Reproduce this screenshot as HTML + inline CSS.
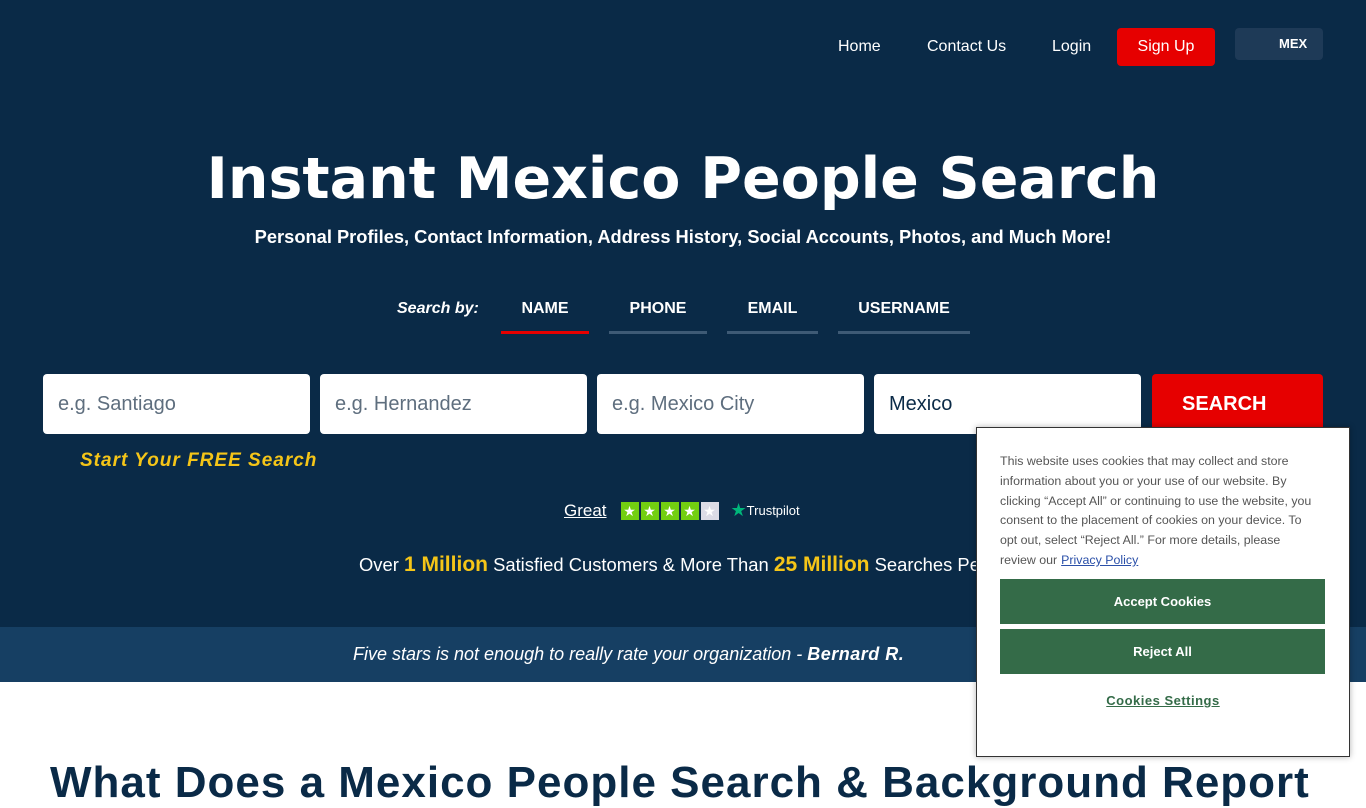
<!DOCTYPE html>
<html><head><meta charset="utf-8"><style>
*{margin:0;padding:0;box-sizing:border-box}
body{width:1366px;height:768px;overflow:hidden;font-family:"Liberation Sans",Arial,sans-serif;background:#fff;position:relative}
.hero{position:absolute;left:0;top:0;width:1366px;height:627px;background:#0a2a47;color:#fff}
.nav a{position:absolute;top:38px;font-size:16px;color:#fff}
.signup{position:absolute;left:1117px;top:28px;width:98px;height:38px;background:#e60000;border-radius:4px;font-size:16px;text-align:center;line-height:37px}
.mex{position:absolute;left:1235px;top:28px;width:88px;height:32px;background:#1e3a57;border-radius:4px;font-size:13px;font-weight:bold;line-height:32px;padding-left:44px}
h1{position:absolute;left:0;width:1366px;top:146px;text-align:center;font-size:57px;font-family:"DejaVu Sans","Liberation Sans",sans-serif;font-weight:bold;white-space:nowrap}
.sub{position:absolute;width:1366px;top:226px;text-align:center;font-size:18.3px;font-weight:bold}
.sb{position:absolute;top:300px;font-size:16px;font-weight:bold}
.tab{position:absolute;top:300px;font-size:16px;font-weight:bold;text-align:center}
.ul{position:absolute;top:331px;height:3px;background:#3e5a75}
input{position:absolute;top:374px;height:60px;width:267px;border:none;border-radius:4px;padding-left:15px;font-size:20px;font-family:"Liberation Sans",sans-serif;color:#0a2a47}
input::placeholder{color:#5e6e7e}
.btn{position:absolute;left:1152px;top:374px;width:171px;height:60px;background:#e60000;border-radius:4px;font-size:20px;font-weight:bold;line-height:60px;padding-left:30px}
.free{position:absolute;left:80px;top:450px;color:#f5c518;font-size:19px;font-weight:bold;font-style:italic;letter-spacing:1px}
.tp{position:absolute;top:500px;left:564px;font-size:17px;display:flex;align-items:center}
.st{width:18px;height:18px;background:#73cf11;margin-right:2px;color:#fff;font-size:14px;text-align:center;line-height:18px}
.over{position:absolute;top:553px;left:359px;font-size:18.4px;white-space:nowrap}
.over b{color:#f5c518;font-size:21px}
.band{position:absolute;top:627px;left:0;width:1366px;height:55px;background:#163f63;color:#fff;font-style:italic;font-size:18px;line-height:55px;padding-left:353px}
.band b{letter-spacing:.5px}
h2{position:absolute;top:758px;left:50px;font-size:44px;color:#0a2a47;font-weight:900;white-space:nowrap;letter-spacing:1px}
.ck{position:absolute;left:976px;top:427px;width:374px;height:330px;background:#fff;border:1px solid #333;box-shadow:0 0 6px rgba(0,0,0,.3)}
.ck p{position:absolute;left:23px;top:24px;width:312px;font-size:12.4px;line-height:19.8px;color:#555}
.ck p a{color:#2a4fa8;text-decoration:underline;margin-left:4px}
.cb{position:absolute;left:23px;width:325px;height:45px;background:#346b48;color:#fff;font-size:13px;font-weight:bold;text-align:center;line-height:45px}
.cs{position:absolute;left:0;width:372px;top:265px;text-align:center;font-size:13px;font-weight:bold;color:#346b48;text-decoration:underline;letter-spacing:.5px}
</style></head><body>
<div class="hero">
<div class="nav"><a style="left:838px">Home</a><a style="left:927px">Contact Us</a><a style="left:1052px">Login</a></div>
<div class="signup">Sign Up</div>
<div class="mex">MEX</div>
<h1>Instant Mexico People Search</h1>
<div class="sub">Personal Profiles, Contact Information, Address History, Social Accounts, Photos, and Much More!</div>
<div class="sb" style="left:397px;font-style:italic">Search by:</div>
<div class="tab" style="left:501px;width:88px">NAME</div><div class="ul" style="left:501px;width:88px;background:#e60000"></div>
<div class="tab" style="left:609px;width:98px">PHONE</div><div class="ul" style="left:609px;width:98px"></div>
<div class="tab" style="left:727px;width:91px">EMAIL</div><div class="ul" style="left:727px;width:91px"></div>
<div class="tab" style="left:838px;width:132px">USERNAME</div><div class="ul" style="left:838px;width:132px"></div>
<input style="left:43px" placeholder="e.g. Santiago">
<input style="left:320px" placeholder="e.g. Hernandez">
<input style="left:597px" placeholder="e.g. Mexico City">
<input style="left:874px" value="Mexico">
<div class="btn">SEARCH</div>
<div class="free">Start Your FREE Search</div>
<div class="tp"><span style="text-decoration:underline;margin-right:14px">Great</span><span class="st">★</span><span class="st">★</span><span class="st">★</span><span class="st">★</span><span class="st" style="background:#dcdce6">★</span><span style="color:#00b67a;font-size:18px;margin-left:10px">★</span><span style="font-size:13px">Trustpilot</span></div>
<div class="over">Over <b>1 Million</b> Satisfied Customers &amp; More Than <b>25 Million</b> Searches Performed</div>
</div>
<div class="band">Five stars is not enough to really rate your organization - <b>Bernard R.</b></div>
<h2>What Does a Mexico People Search &amp; Background Report</h2>
<div class="ck">
<p>This website uses cookies that may collect and store information about you or your use of our website. By clicking “Accept All” or continuing to use the website, you consent to the placement of cookies on your device. To opt out, select “Reject All.” For more details, please review our<a>Privacy Policy</a></p>
<div class="cb" style="top:151px">Accept Cookies</div>
<div class="cb" style="top:201px">Reject All</div>
<div class="cs">Cookies Settings</div>
</div>
</body></html>
